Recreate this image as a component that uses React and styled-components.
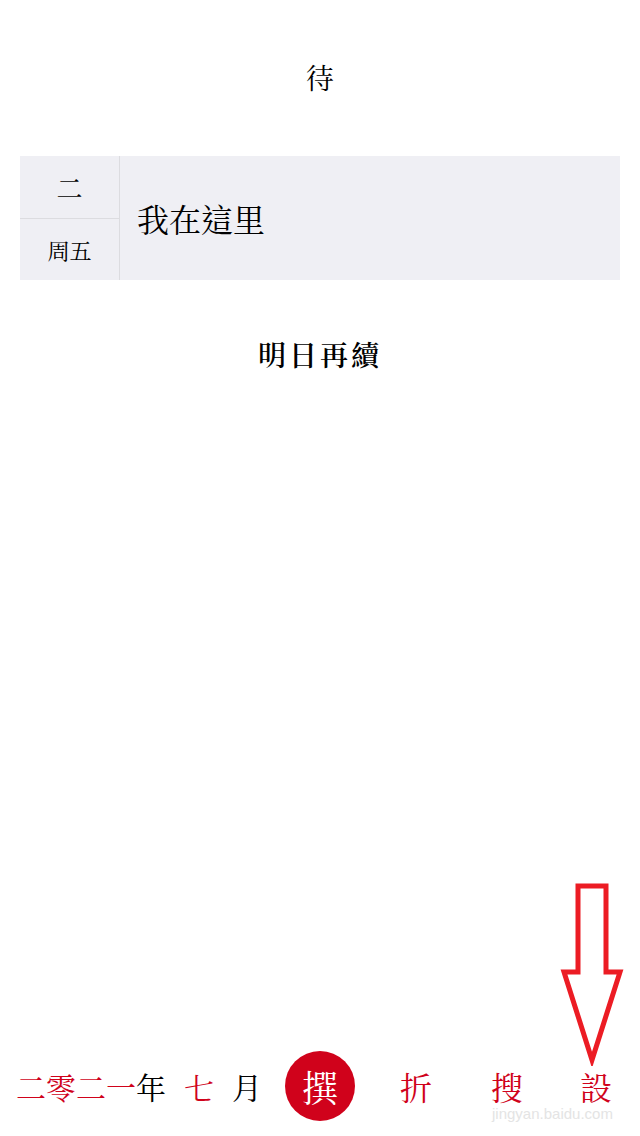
import styled, { createGlobalStyle } from 'styled-components'

const RED = '#d0021b'

const GlobalStyle = createGlobalStyle`
  html, body {
    margin: 0;
    padding: 0;
    background: #fff;
  }
  body {
    font-family: "Noto Serif CJK TC", "Noto Sans CJK TC", "Liberation Serif", serif;
    color: #000;
  }
`

const Page = styled.div`
  position: relative;
  width: 640px;
  min-height: 1136px;
  display: flex;
  flex-direction: column;
  overflow: hidden;
`

const Header = styled.h1`
  margin: 0;
  height: 156px;
  padding-top: 61px;
  box-sizing: border-box;
  font-size: 28px;
  line-height: 32px;
  font-weight: 400;
  text-align: center;
`

const Entry = styled.div`
  margin: 0 20px;
  height: 124px;
  display: flex;
  background: #efeff4;
`

const DateCol = styled.div`
  width: 99px;
  display: flex;
  flex-direction: column;
  border-right: 1px solid #dcdce0;
`

const DateCell = styled.div`
  flex: 1;
  display: flex;
  align-items: center;
  justify-content: center;
  font-size: ${p => p.$size}px;
  border-top: ${p => (p.$divided ? '1px solid #dcdce0' : 'none')};
`

const EntryText = styled.div`
  flex: 1;
  display: flex;
  align-items: center;
  padding-left: 17px;
  font-size: 32px;
`

const More = styled.div`
  margin-top: 58px;
  text-align: center;
  font-size: 28px;
  line-height: 32px;
  letter-spacing: 3px;
  font-weight: 600;
`

const Footer = styled.nav`
  margin-top: auto;
  height: 100px;
  display: grid;
  grid-template-columns: 270px 100px 92px 90px 88px;
  align-items: center;
`

const DateLine = styled.div`
  display: flex;
  align-items: center;
  gap: 18px;
  padding-left: 16px;
  font-size: 30px;
`

const Word = styled.span`
  color: ${p => (p.$red ? RED : '#000')};
`

const Stamp = styled.div`
  justify-self: center;
  width: 70px;
  height: 70px;
  border-radius: 50%;
  background: ${RED};
  color: #fff;
  display: flex;
  align-items: center;
  justify-content: center;
  font-size: 36px;
`

const Tab = styled.div`
  text-align: center;
  color: ${RED};
  font-size: 32px;
`

const Arrow = styled.svg`
  position: absolute;
  left: 558px;
  top: 880px;
`

const Watermark = styled.div`
  position: absolute;
  left: 492px;
  top: 1105px;
  color: #e4e4e4;
  font-family: "Liberation Sans", Arial, sans-serif;
  font-size: 15px;
`

export default function App() {
  return (
    <Page>
      <GlobalStyle />
      <Header>待</Header>
      <Entry>
        <DateCol>
          <DateCell $size={26}>二</DateCell>
          <DateCell $size={22} $divided>周五</DateCell>
        </DateCol>
        <EntryText>我在這里</EntryText>
      </Entry>
      <More>明日再續</More>
      <Footer>
        <DateLine>
          <span>
            <Word $red>二零二一</Word>
            <Word>年</Word>
          </span>
          <Word $red>七</Word>
          <Word>月</Word>
        </DateLine>
        <Stamp>撰</Stamp>
        <Tab>折</Tab>
        <Tab>搜</Tab>
        <Tab>設</Tab>
      </Footer>
      <Watermark>jingyan.baidu.com</Watermark>
      <Arrow width="68" height="186" viewBox="0 0 68 186">
        <polygon
          points="20,6 48,6 48,92 62,92 34,180 6,92 20,92"
          fill="none"
          stroke="#ec1c24"
          strokeWidth="5"
          strokeLinejoin="miter"
        />
      </Arrow>
    </Page>
  )
}
